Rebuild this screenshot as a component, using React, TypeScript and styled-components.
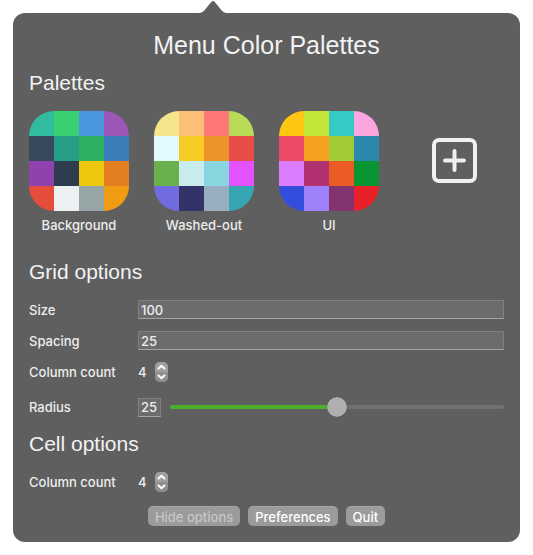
import React, { useState } from "react";
import styled, { createGlobalStyle } from "styled-components";

const GlobalStyle = createGlobalStyle`
  * { box-sizing: border-box; }
  body {
    margin: 0;
    background: #fff;
    font-family: Inter, "Liberation Sans", sans-serif;
    font-size: 13px;
    font-weight: 500;
    line-height: 16px;
    color: #ededed;
  }
  button, input { font: inherit; color: inherit; }
`;

const Popover = styled.div`
  padding: 0 13px 13px;
`;

const Arrow = styled.svg`
  display: block;
  width: 30px;
  height: 13px;
  margin-left: 185px;
  fill: #5f5f5f;
`;

const Panel = styled.main`
  padding: 16px;
  border-radius: 12px;
  background: #5f5f5f;
`;

const Title = styled.h1`
  margin: 0 0 8px;
  font-family: "Liberation Sans", Arial, sans-serif;
  font-size: 25px;
  line-height: 32px;
  font-weight: 400;
  text-align: center;
  color: #f2f2f2;
`;

const Heading = styled.h2`
  margin: 0 0 14px;
  font-family: "Liberation Sans", Arial, sans-serif;
  font-size: 21px;
  line-height: 28px;
  font-weight: 400;
  color: #f2f2f2;
`;

const PaletteGrid = styled.div`
  display: grid;
  grid-template-columns: repeat(4, 100px);
  gap: 25px;
  margin-bottom: 25px;
`;

const Palette = styled.figure`
  display: flex;
  flex-direction: column;
  gap: 6px;
  margin: 0;
  text-align: center;
`;

const Swatches = styled.div`
  display: grid;
  grid-template-columns: repeat(4, 1fr);
  height: 100px;
  border-radius: 25px;
  overflow: hidden;
`;

const Swatch = styled.span<{ $color: string }>`
  background: ${(p) => p.$color};
`;

const AddButton = styled.button`
  display: flex;
  align-items: center;
  justify-content: center;
  height: 100px;
  padding: 0;
  border: 0;
  background: none;
  color: #f0f0f0;
`;

const Options = styled.div`
  display: flex;
  flex-direction: column;
  gap: 11px;
  margin-bottom: 13px;
`;

const Row = styled.div<{ $spaced?: boolean }>`
  display: grid;
  grid-template-columns: 109px 1fr;
  align-items: start;
  min-height: 20px;
  margin-top: ${(p) => (p.$spaced ? "4px" : "0")};
`;

const Label = styled.label`
  line-height: 20px;
`;

const Controls = styled.div`
  display: flex;
  align-items: center;
  gap: 9px;
`;

const StepperControls = styled(Controls)`
  gap: 8px;
`;

const Field = styled.input<{ $compact?: boolean }>`
  width: ${(p) => (p.$compact ? "23px" : "100%")};
  height: 19px;
  padding: 0 2px;
  border: 1px solid #808080;
  border-bottom-color: #a3a3a3;
  border-radius: 0;
  background: #6c6c6c;
  outline: none;
`;

const StepperBox = styled.div`
  display: flex;
  flex-direction: column;
  width: 13px;
  height: 20px;
  border-radius: 5px;
  overflow: hidden;
  background: #9b9b9b;
`;

const StepButton = styled.button<{ $down?: boolean }>`
  display: flex;
  align-items: center;
  justify-content: center;
  height: 10px;
  padding: 0;
  border: 0;
  color: #fff;
  background: ${(p) => (p.$down ? "#8f8f8f" : "#a0a0a0")};
`;

const Slider = styled.input<{ $fill: number }>`
  flex: 1;
  min-width: 0;
  height: 20px;
  margin: 0;
  appearance: none;
  background: none;
  outline: none;

  &::-webkit-slider-runnable-track {
    height: 4px;
    border-radius: 2px;
    background: linear-gradient(
      to right,
      #4caf2a ${(p) => p.$fill}%,
      #707070 ${(p) => p.$fill}%
    );
  }

  &::-webkit-slider-thumb {
    appearance: none;
    width: 20px;
    height: 20px;
    margin-top: -8px;
    border-radius: 50%;
    background: #afafaf;
    box-shadow: 0 0 1px rgba(0, 0, 0, 0.5);
  }
`;

const Footer = styled.footer`
  display: flex;
  justify-content: center;
  gap: 8px;
  padding-top: 1px;
`;

const Button = styled.button`
  height: 20px;
  padding: 0 7px;
  border: 0;
  border-top: 1px solid #a6a6a6;
  border-radius: 5px;
  background: #9b9b9b;
  color: #fff;
  line-height: 18px;

  &:disabled {
    color: #c6c6c6;
  }
`;

const palettes = [
  {
    name: "Background",
    colors: [
      "#32bc9e", "#39d072", "#4996dc", "#9c57b7",
      "#38495e", "#279f86", "#2eb062", "#3a7fba",
      "#8f41ae", "#2d3c4f", "#eec60e", "#e37f20",
      "#e44c3c", "#ecf0f1", "#96a5a6", "#f09c12",
    ],
  },
  {
    name: "Washed-out",
    colors: [
      "#f5e58c", "#fdbe76", "#ff7878", "#b8dc58",
      "#e0faff", "#f5cb24", "#ec932b", "#e94d4a",
      "#6ab04c", "#c8ecee", "#87d6e0", "#e252ff",
      "#706ce0", "#333269", "#98afc2", "#37a6b3",
    ],
  },
  {
    name: "UI",
    colors: [
      "#fdc613", "#c3e738", "#35cac6", "#fca6df",
      "#ec4b67", "#f5a11f", "#a1cc38", "#2b88aa",
      "#db7dfd", "#b23171", "#ed5b25", "#0a9432",
      "#334edc", "#9f80fb", "#823370", "#e82027",
    ],
  },
];

function Stepper({ id, label }: { id: string; label: string }) {
  const [value, setValue] = useState(4);
  return (
    <Row>
      <Label htmlFor={id}>{label}</Label>
      <StepperControls>
        <output id={id}>{value}</output>
        <StepperBox>
          <StepButton aria-label="Increase" onClick={() => setValue(value + 1)}>
            <svg width="9" height="6" viewBox="0 0 9 6" fill="none" stroke="currentColor" strokeWidth="2" strokeLinecap="round" strokeLinejoin="round">
              <path d="M1.5 4.5 4.5 1.7 7.5 4.5" />
            </svg>
          </StepButton>
          <StepButton $down aria-label="Decrease" onClick={() => setValue(Math.max(1, value - 1))}>
            <svg width="9" height="6" viewBox="0 0 9 6" fill="none" stroke="currentColor" strokeWidth="2" strokeLinecap="round" strokeLinejoin="round">
              <path d="M1.5 1.5 4.5 4.3 7.5 1.5" />
            </svg>
          </StepButton>
        </StepperBox>
      </StepperControls>
    </Row>
  );
}

export default function App() {
  const [radius, setRadius] = useState(25);
  return (
    <>
      <GlobalStyle />
      <Popover>
        <Arrow viewBox="0 0 30 13">
          <path d="M0 13C4 13 5.500 11.500 7.500 9L13.500 1.800Q15 0 16.500 1.800L22.500 9C24.500 11.500 26 13 30 13Z" />
        </Arrow>
        <Panel>
          <Title>Menu Color Palettes</Title>
          <Heading>Palettes</Heading>
          <PaletteGrid>
            {palettes.map((palette) => (
              <Palette key={palette.name}>
                <Swatches>
                  {palette.colors.map((color) => (
                    <Swatch key={color} $color={color} />
                  ))}
                </Swatches>
                <figcaption>{palette.name}</figcaption>
              </Palette>
            ))}
            <AddButton aria-label="Add palette">
              <svg width="46" height="46" viewBox="0 0 46 46" fill="none" stroke="currentColor" strokeWidth="4" strokeLinecap="round">
                <rect x="3" y="2" width="41" height="41" rx="5" />
                <path d="M23.500 13v19M14 22.500h19" />
              </svg>
            </AddButton>
          </PaletteGrid>

          <Heading>Grid options</Heading>
          <Options>
            <Row>
              <Label htmlFor="size">Size</Label>
              <Field id="size" defaultValue="100" />
            </Row>
            <Row>
              <Label htmlFor="spacing">Spacing</Label>
              <Field id="spacing" defaultValue="25" />
            </Row>
            <Stepper id="grid-columns" label="Column count" />
            <Row $spaced>
              <Label htmlFor="radius">Radius</Label>
              <Controls>
                <Field
                  id="radius"
                  $compact
                  value={radius}
                  onChange={(e) => setRadius(Number(e.target.value) || 0)}
                />
                <Slider
                  type="range"
                  aria-label="Radius"
                  min={0}
                  max={50}
                  value={radius}
                  $fill={radius * 2}
                  onChange={(e) => setRadius(Number(e.target.value))}
                />
              </Controls>
            </Row>
          </Options>

          <Heading>Cell options</Heading>
          <Options>
            <Stepper id="cell-columns" label="Column count" />
          </Options>

          <Footer>
            <Button disabled>Hide options</Button>
            <Button>Preferences</Button>
            <Button>Quit</Button>
          </Footer>
        </Panel>
      </Popover>
    </>
  );
}
